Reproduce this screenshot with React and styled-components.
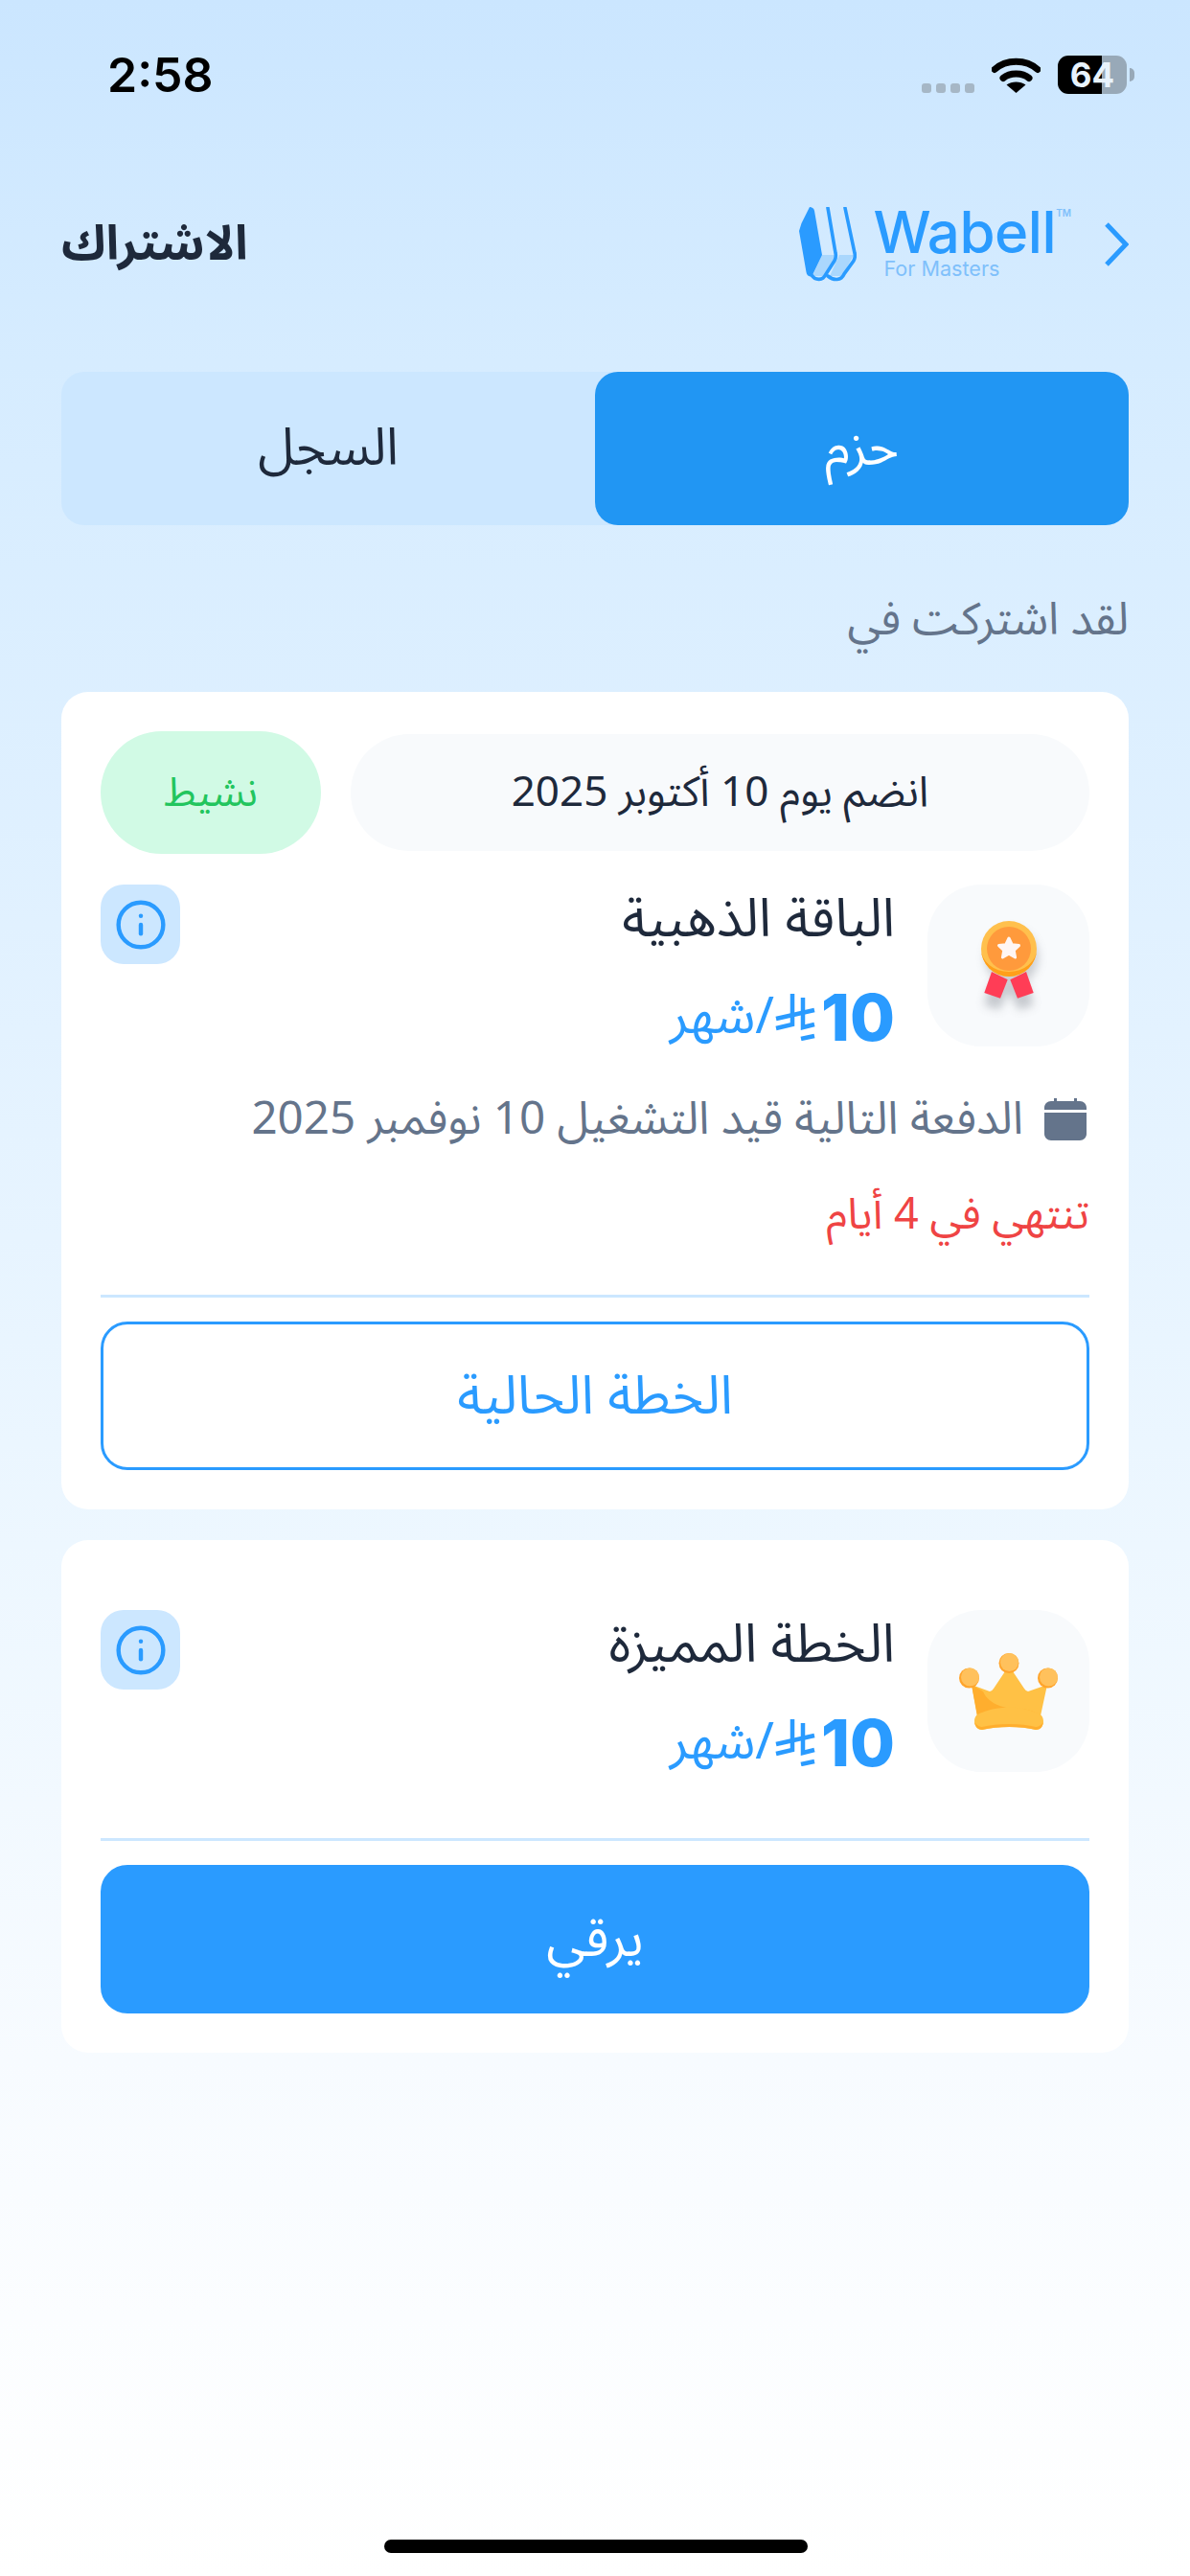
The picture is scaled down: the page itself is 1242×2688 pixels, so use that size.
import styled, { createGlobalStyle } from 'styled-components'
import { Info } from 'lucide-react'

const GlobalStyle = createGlobalStyle`
html, body {
    margin: 0;
    padding: 0;
}
body {
    font-family: "Noto Sans Arabic", "DejaVu Sans", sans-serif;
}
`
const Page = styled.div`
width: 1242px;
height: 2688px;
box-sizing: border-box;
background: linear-gradient(180deg, #cbe6ff 0%, #d6ecff 14%, #e3f2ff 40%, #edf7ff 60%, #f7fbff 80%, #ffffff 100%);
display: flex;
flex-direction: column;
position: relative;
overflow: hidden;
`
const StatusBar = styled.div`
display: flex;
justify-content: space-between;
align-items: center;
height: 40px;
margin-top: 58px;
padding: 0 66px 0 112px;
direction: ltr;
`
const Time = styled.div`
font-family: Inter, sans-serif;
font-weight: 600;
font-size: 50px;
color: #000;
`
const StatusIcons = styled.div`
display: flex;
align-items: center;
`
const Dots = styled.div`
display: flex;
gap: 5px;
margin: 28px 18px 0 0;
`
const Dot = styled.span`
width: 10px;
height: 10px;
border-radius: 3px;
background: #a6b7c6;
`
const Battery = styled.div`
width: 72px;
height: 40px;
margin-left: 18px;
border-radius: 11px;
background: linear-gradient(90deg, #000 64%, #98a9b8 64%);
color: #e8f3fc;
font-family: Inter, sans-serif;
font-weight: 700;
font-size: 35px;
line-height: 40px;
text-align: center;
position: relative;
&::after {
    content: "";
    position: absolute;
    right: -8px;
    top: 13px;
    width: 5px;
    height: 14px;
    border-radius: 0 5px 5px 0;
    background: #98a9b8;
}
`
const Header = styled.div`
display: flex;
justify-content: space-between;
align-items: center;
height: 90px;
margin-top: 112px;
padding: 0 64px;
`
const Title = styled.h1`
margin: 0;
font-size: 50px;
font-weight: 700;
color: #1e293b;
`
const BrandLink = styled.div`
display: flex;
align-items: center;
gap: 50px;
direction: ltr;
color: #2a9bff;
`
const Brand = styled.div`
display: flex;
align-items: flex-start;
gap: 17px;
`
const BrandText = styled.div`
display: flex;
flex-direction: column;
position: relative;
font-family: Inter, sans-serif;
`
const BrandName = styled.div`
font-size: 60px;
line-height: 52px;
font-weight: 500;
letter-spacing: -0.5px;
`
const BrandSub = styled.div`
font-size: 21.6px;
line-height: 24px;
margin-left: 11px;
color: #7fc0fb;
`
const Tm = styled.span`
position: absolute;
right: -16px;
top: 0;
font-size: 10px;
line-height: 12px;
font-weight: 600;
color: #7fc0fb;
`
const Tabs = styled.div`
display: flex;
height: 160px;
margin: 88px 64px 0;
background: #cce7ff;
border-radius: 24px;
`
const Tab = styled.div`
flex: 1;
display: flex;
align-items: center;
justify-content: center;
border-radius: 24px;
font-size: 54px;
color: ${(p) => (p.$active ? '#fff' : '#1e293b')};
background: ${(p) => (p.$active ? '#2196f3' : 'transparent')};
`
const SectionLabel = styled.div`
margin: 69px 64px 0;
height: 60px;
line-height: 60px;
font-size: 47px;
color: #64748b;
`
const Card = styled.div`
margin: ${(p) => p.$top}px 64px 0;
padding: ${(p) => p.$padTop}px 41px 41px;
background: #fff;
border-radius: 28px;
`
const DateRow = styled.div`
display: flex;
align-items: center;
gap: 31px;
margin-bottom: 32px;
`
const DatePill = styled.div`
flex: 1;
height: 122px;
display: flex;
align-items: center;
justify-content: center;
border-radius: 61px;
background: #f8fafc;
font-size: 44px;
color: #1e293b;
`
const StatusPill = styled.div`
width: 230px;
height: 128px;
display: flex;
align-items: center;
justify-content: center;
border-radius: 64px;
background: #d1fae5;
font-size: 42px;
color: #22c55e;
`
const PlanRow = styled.div`
display: flex;
align-items: flex-start;
gap: 34px;
`
const IconBox = styled.div`
width: 169px;
height: 169px;
flex-shrink: 0;
display: flex;
align-items: center;
justify-content: center;
border-radius: 56px;
background: #f8fafc;
`
const PlanText = styled.div`
flex: 1;
display: flex;
flex-direction: column;
gap: 16px;
`
const PlanName = styled.div`
height: 74px;
line-height: 74px;
font-size: 55.5px;
color: #1e293b;
`
const Price = styled.div`
display: flex;
align-items: center;
height: 95px;
font-size: 53px;
color: #2a9bff;
`
const Amount = styled.span`
font-family: Inter, sans-serif;
font-weight: 800;
font-size: 68px;
direction: ltr;
margin-left: 5px;
`
const InfoButton = styled.div`
width: 83px;
height: 83px;
display: flex;
align-items: center;
justify-content: center;
border-radius: 24px;
background: #cce7ff;
color: #2a9bff;
`
const NextPayment = styled.div`
display: flex;
align-items: center;
gap: 22px;
margin-top: 30px;
height: 60px;
font-size: 47.5px;
color: #64748b;
`
const Expiry = styled.div`
margin-top: 40px;
height: 60px;
line-height: 60px;
font-size: 45px;
color: #ef4444;
`
const Divider = styled.div`
height: 3px;
background: #cce7ff;
margin: ${(p) => p.$top}px 0 25px;
`
const ActionButton = styled.div`
height: 155px;
box-sizing: border-box;
display: flex;
align-items: center;
justify-content: center;
border-radius: 28px;
font-size: ${(p) => (p.$filled ? 55 : 56)}px;
border: 3px solid #2a9bff;
color: ${(p) => (p.$filled ? '#fff' : '#2a9bff')};
background: ${(p) => (p.$filled ? '#2a9bff' : '#fff')};
`
const HomeBar = styled.div`
position: absolute;
left: 401px;
bottom: 24px;
width: 442px;
height: 14px;
border-radius: 7px;
background: #000;
`
const CalendarWrap = styled.svg`
margin-right: 3px;
flex-shrink: 0;
`

const WifiIcon = () => (
    <svg width="51" height="37" viewBox="0 0 51 37" fill="none">
        <path d="M3 12.5C15 1.5 36 1.5 48 12.5" stroke="#000" strokeWidth="7" strokeLinecap="round" />
        <path d="M12 21.5C19 15.5 32 15.5 39 21.5" stroke="#000" strokeWidth="7" strokeLinecap="round" />
        <path d="M25.5 37L15.5 28.5C21 24.5 30 24.5 35.5 28.5Z" fill="#000" />
    </svg>
)

const BookLogo = () => (
    <svg width="60" height="78" viewBox="0 0 60 78" fill="none">
        <path d="M24 50L40 50L28 72L14 72Z" fill="#aad7fd" />
        <path d="M42 50L57 50L45 72L32 72Z" fill="#aad7fd" />
        <path d="M11 0C13 0 15.5 1 16 4L24 50L14 71C12 74 8 72 7.5 68L0 25L2.5 17Z" fill="#2a9bff" />
        <path d="M30 1L38 48C39 52 38 54 37 56L28 70C25 77 17 77 13 71" stroke="#2a9bff" strokeWidth="3.6" strokeLinecap="round" />
        <path d="M48 1L58 48C59 52 58 54 57 56L47 70C44 77 36 77 30 72" stroke="#2a9bff" strokeWidth="3.6" strokeLinecap="round" />
    </svg>
)

const Chevron = () => (
    <svg width="26" height="48" viewBox="0 0 26 48" fill="none">
        <path d="M3 3L23 24L3 45" stroke="#2a9bff" strokeWidth="5" />
    </svg>
)

const MedalIcon = () => (
    <svg width="80" height="110" viewBox="0 0 80 110">
        <defs>
            <filter id="medalBlur" x="-30%" y="-30%" width="160%" height="160%">
                <feGaussianBlur stdDeviation="5" />
            </filter>
        </defs>
        <ellipse cx="43" cy="46" rx="28" ry="30" fill="#8a8f98" opacity="0.4" filter="url(#medalBlur)" />
        <path d="M20 70L14 92L30 97L40 78L50 97L66 92L60 70Z" fill="#8a8f98" opacity="0.45" filter="url(#medalBlur)" transform="translate(0 4)" />
        <path d="M22 61L14.3 83L31 88.7L38.7 69.3Z" fill="#ff3d56" />
        <path d="M58 61L65.7 83L49 88.7L41.3 69.3Z" fill="#ff3d56" />
        <circle cx="40" cy="37" r="29" fill="#ffc04d" />
        <path d="M11 37a29 29 0 0 0 58 0a29 24 0 0 1 -58 0Z" fill="#ff9f1a" />
        <circle cx="40" cy="37" r="23" fill="#ff9a3c" />
        <path d="M40 26L43.3 32.8L50.5 33.6L45.2 38.6L46.6 46L40 42.2L33.4 46L34.8 38.6L29.5 33.6L36.7 32.8Z" fill="#fff6f3" stroke="#fff6f3" strokeWidth="3" strokeLinejoin="round" />
    </svg>
)

const CrownIcon = () => (
    <svg width="103" height="80" viewBox="0 0 103 80">
        <path d="M13 33L32 40Q34 40 36 37L52 13L68 37Q70 40 72 40L92 33L84 70H20Z" fill="#ffc145" />
        <path d="M13 33L25 40C30 52 45 58 60 58C72 58 80 61 85 66L84 72H20Z" fill="#ffae2e" />
        <path d="M24 62C40 55 65 55 80 62C85 63 88 66 88 71C88 76 85 80 80 80C65 76 40 76 24 80C19 80 16 76 16 71C16 66 19 63 24 62Z" fill="#ffc145" />
        <path d="M16 72C17 77 20 80 24 80C40 76 65 76 80 80C85 80 87 77 88 72C85 76 82 77 80 77C65 73 40 73 24 77C22 77 19 76 16 72Z" fill="#ffae2e" />
        <circle cx="10.5" cy="26" r="10.5" fill="#ffa42b" />
        <circle cx="11.5" cy="25" r="9.5" fill="#ffc15c" />
        <circle cx="52" cy="10.5" r="10.5" fill="#ffa42b" />
        <circle cx="52.5" cy="9.5" r="9.5" fill="#ffc15c" />
        <circle cx="92.5" cy="26" r="10.5" fill="#ffa42b" />
        <circle cx="93.5" cy="25" r="9.5" fill="#ffc15c" />
    </svg>
)

const RiyalSign = () => (
    <svg width="44" height="50" viewBox="0 0 44 50" fill="none" stroke="#2a9bff" strokeWidth="4.5">
        <path d="M19 1V33L2 37" />
        <path d="M30 5V36L42 33" />
        <path d="M2 27L42 18" />
        <path d="M28 48L42 45" />
    </svg>
)

const CalendarIcon = () => (
    <CalendarWrap width="44" height="44" viewBox="0 0 44 44" fill="#64748b">
        <path d="M0 15H44V37C44 41 41 44 37 44H7C3 44 0 41 0 37Z" />
        <path d="M7 3H10V0H13V3H31V0H34V3H37C41 3 44 6 44 10V12H0V10C0 6 3 3 7 3Z" />
    </CalendarWrap>
)

function PlanHead({ icon, name }) {
    return (
        <PlanRow>
            <IconBox>{icon}</IconBox>
            <PlanText>
                <PlanName>{name}</PlanName>
                <Price>
                    <Amount>10</Amount>
                    <RiyalSign />
                    <span>/شهر</span>
                </Price>
            </PlanText>
            <InfoButton><Info size={56} strokeWidth={1.9} /></InfoButton>
        </PlanRow>
    )
}

export default function App() {
    return (
        <Page dir="rtl">
            <GlobalStyle />
            <StatusBar>
                <Time>2:58</Time>
                <StatusIcons>
                    <Dots><Dot /><Dot /><Dot /><Dot /></Dots>
                    <WifiIcon />
                    <Battery>64</Battery>
                </StatusIcons>
            </StatusBar>
            <Header>
                <BrandLink>
                    <Brand>
                        <BookLogo />
                        <BrandText>
                            <BrandName>Wabell</BrandName>
                            <BrandSub>For Masters</BrandSub>
                            <Tm>TM</Tm>
                        </BrandText>
                    </Brand>
                    <Chevron />
                </BrandLink>
                <Title>الاشتراك</Title>
            </Header>
            <Tabs>
                <Tab $active>حزم</Tab>
                <Tab>السجل</Tab>
            </Tabs>
            <SectionLabel>لقد اشتركت في</SectionLabel>
            <Card $top={45} $padTop={41}>
                <DateRow>
                    <DatePill>انضم يوم 10 أكتوبر 2025</DatePill>
                    <StatusPill>نشيط</StatusPill>
                </DateRow>
                <PlanHead icon={<MedalIcon />} name="الباقة الذهبية" />
                <NextPayment>
                    <CalendarIcon />
                    <span>الدفعة التالية قيد التشغيل 10 نوفمبر 2025</span>
                </NextPayment>
                <Expiry>تنتهي في 4 أيام</Expiry>
                <Divider $top={53} />
                <ActionButton>الخطة الحالية</ActionButton>
            </Card>
            <Card $top={32} $padTop={73}>
                <PlanHead icon={<CrownIcon />} name="الخطة المميزة" />
                <Divider $top={53} />
                <ActionButton $filled>يرقي</ActionButton>
            </Card>
            <HomeBar />
        </Page>
    )
}
